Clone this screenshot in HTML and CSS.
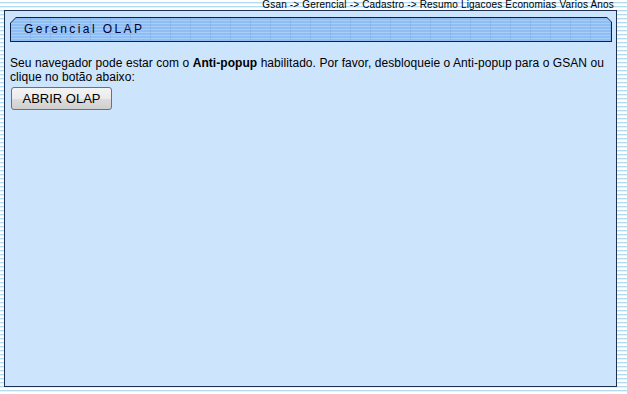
FILE: index.html
```html
<!DOCTYPE html>
<html>
<head>
<meta charset="utf-8">
<link rel="stylesheet" href="styles.css">
</head>
<body>
<div class="page">
  <div class="crumb">Gsan -&gt; Gerencial -&gt; Cadastro -&gt; Resumo Ligacoes Economias Varios Anos</div>
  <div class="panel">
    <div class="head-border">
      <div class="head">Gerencial OLAP</div>
    </div>
    <p class="msg">Seu navegador pode estar com o <b>Anti-popup</b> habilitado. Por favor, desbloqueie o Anti-popup para o GSAN ou clique no botão abaixo:</p>
    <button class="btn" type="button">ABRIR OLAP</button>
  </div>
</div>
</body>
</html>
```
FILE: styles.css
```css
html, body {
  margin: 0;
  padding: 0;
}
body {
  width: 627px;
  height: 394px;
  overflow: hidden;
  background: repeating-linear-gradient(to bottom, #ffffff 0, #ffffff 2px, #b4daf2 2px, #b4daf2 3px, #e6f3fb 3px, #e6f3fb 4px);
  font-family: "Liberation Sans", Arial, sans-serif;
}
.page {
  width: 613px;
  padding-left: 4px;
}
.crumb {
  height: 10px;
  font-size: 10px;
  line-height: 10px;
  letter-spacing: 0.18px;
  text-align: right;
  padding-right: 3px;
  color: #000;
  white-space: nowrap;
}
.panel {
  box-sizing: border-box;
  width: 613px;
  height: 377px;
  background: #cce4fc;
  border: 1px solid #1c3050;
  padding: 6px 4px 0 5px;
}
.head-border {
  height: 25px;
  background: #10204a;
  padding: 1px;
  box-sizing: border-box;
  clip-path: polygon(6px 0, calc(100% - 5px) 0, 100% 5px, 100% 100%, 0 100%, 0 6px);
}
.head {
  height: 23px;
  box-sizing: border-box;
  padding-left: 13px;
  font-size: 12px;
  line-height: 22px;
  letter-spacing: 2.4px;
  color: #000030;
  background:
    repeating-linear-gradient(to right, transparent 0, transparent 19px, rgba(120,160,220,0.35) 19px, rgba(120,160,220,0.35) 20px),
    repeating-linear-gradient(to bottom, #8ebef4 0, #8ebef4 2px, #a6cef8 2px, #a6cef8 3px);
  clip-path: polygon(5px 0, calc(100% - 4px) 0, 100% 4px, 100% 100%, 0 100%, 0 5px);
}
.msg {
  margin: 14px 0 0 0;
  font-size: 12px;
  line-height: 14px;
  letter-spacing: 0.06px;
  color: #000;
}
.btn {
  display: block;
  margin: 3px 0 0 1px;
  width: 101px;
  height: 23px;
  padding: 0;
  font-family: "Liberation Sans", Arial, sans-serif;
  font-size: 13px;
  color: #000;
  border: 1px solid #707070;
  border-radius: 3px;
  background: linear-gradient(to bottom, #f3f3f3 0%, #ebebeb 50%, #dddddd 51%, #cfcfcf 100%);
}
```
